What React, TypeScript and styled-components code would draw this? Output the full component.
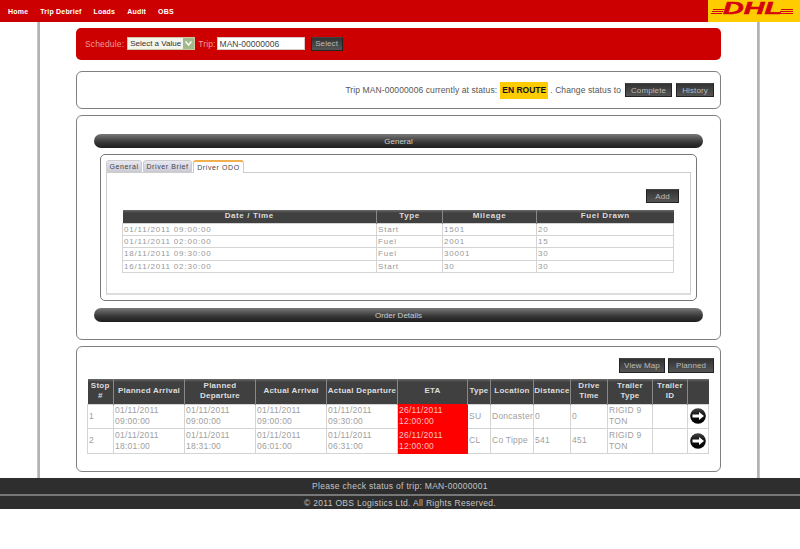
import React from "react";
import styled, { createGlobalStyle } from "styled-components";

const Global = createGlobalStyle`
  html, body { margin: 0; padding: 0; background: #fff; }
  body { font-family: "Liberation Sans", Arial, sans-serif; width: 800px; height: 549px; overflow: hidden; }
  * { box-sizing: border-box; }
`;

const TopBar = styled.header`
  height: 22px; background: #cc0000; display: flex; justify-content: space-between;
`;
const Nav = styled.nav`
  display: flex; gap: 12px; padding: 0 0 0 8px; align-items: center; height: 22px;
`;
const NavLink = styled.a`
  color: #fff; font-size: 7px; font-weight: bold; letter-spacing: 0.2px;
`;
const LogoBox = styled.div`
  width: 92px; height: 22px; background: #ffcc00; display: block;
`;

const Column = styled.main`
  width: 723px; margin-left: 37px; height: 456px; padding: 6px 39px 6px 39px;
  display: flex; flex-direction: column;
  background: linear-gradient(90deg, #d0d0d0 0, #a8a8a8 2px, #c0c0c0 3px, #fff 3px, #fff 720px, #c0c0c0 720px, #a8a8a8 721px, #d0d0d0 723px);
`;
const RedPanel = styled.form`
  height: 32px; background: #cc0000; border-radius: 5px; display: flex; align-items: center;
  padding: 0 0 1px 9px; margin-bottom: 11px; color: #ee9a9a; font-size: 8.5px; letter-spacing: 0.15px;
`;
const FieldLabel = styled.span<{ $gap: number }>`
  margin-right: ${(p) => p.$gap}px;
`;
const FakeSelect = styled.div`
  width: 68px; height: 13px; background: #f4f4ec; border: 1px solid #c9c9a8; color: #333;
  font-size: 8px; letter-spacing: 0; white-space: nowrap;
  display: flex; align-items: center; justify-content: space-between; padding-left: 2px; margin-right: 3px;
`;
const SelectArrow = styled.span`
  width: 11px; height: 11px; background: #a3b98a; display: flex; align-items: center; justify-content: center;
`;
const TripInput = styled.div`
  width: 88px; height: 13px; background: #fff; border: 1px solid #d8c8c8; color: #444;
  font-size: 8.5px; letter-spacing: 0; display: flex; align-items: center; padding-left: 2px; margin-right: 6px;
`;
const Button = styled.button<{ $w: number; $h?: number }>`
  width: ${(p) => p.$w}px; height: ${(p) => p.$h ?? 14}px; padding: 0;
  background: linear-gradient(#333, #555); border: 1px solid #222; border-top-color: #444;
  color: #bbb; font: 8px "Liberation Sans", Arial, sans-serif; letter-spacing: 0.1px;
  display: flex; align-items: center; justify-content: center;
`;
const Panel = styled.section<{ $h: number }>`
  height: ${(p) => p.$h}px; border: 1px solid #808080; border-radius: 6px; background: #fff; flex: none;
`;
const StatusPanel = styled(Panel)`
  display: flex; align-items: center; justify-content: flex-end; padding-right: 6px; margin-bottom: 6px;
  color: #555; font-size: 8.5px; letter-spacing: 0.1px;
`;
const Badge = styled.span`
  background: #ffcc00; color: #111; font-weight: bold; font-size: 8.5px; letter-spacing: 0; width: 48px; height: 17px;
  display: flex; align-items: center; justify-content: center; margin: 0 2px 0 3px;
`;
const StatusText = styled.span`
  margin-right: 4px;
`;
const StatusButton = styled(Button)`
  margin-left: 4px;
`;
const GeneralPanel = styled(Panel)`
  padding: 18px 17px 0; margin-bottom: 6px;
`;
const Bar = styled.div`
  height: 14px; border-radius: 7px; background: linear-gradient(#7a7a7a 0, #5c5c5c 25%, #363636 60%, #1e1e1e 100%);
  color: #ccc; font-size: 8px; display: flex; align-items: center; justify-content: center;
`;
const InnerBox = styled.div`
  margin: 6px 6px 7px; height: 147px; border: 1px solid #777; border-radius: 5px; padding: 5px 5px 0;
`;
const Tabs = styled.div`
  display: flex; gap: 1px; height: 12px;
`;
const Tab = styled.div<{ $active?: boolean; $w: number }>`
  width: ${(p) => p.$w}px; height: ${(p) => (p.$active ? 13 : 12)}px; position: relative; z-index: 1;
  font-size: 7px; letter-spacing: 0.6px; color: #444; white-space: nowrap;
  display: flex; align-items: center; justify-content: center;
  background: ${(p) => (p.$active ? "#fff" : "linear-gradient(#e8e8f2, #ccccdc)")};
  border: 1px solid #ccc; border-bottom: ${(p) => (p.$active ? "none" : "1px solid #ccc")};
  border-top: ${(p) => (p.$active ? "2px solid #f0b050" : "1px solid #ccc")};
  border-radius: 3px 3px 0 0;
`;
const TabBody = styled.div`
  height: 123px; border: 1px solid #ccc; border-bottom: 2px solid #ddd; padding: 16px 11px 0 15px;
`;
const ActionRow = styled.div`
  display: flex; justify-content: flex-end; gap: 3px; margin-bottom: 7px;
`;
const Grid = styled.table<{ $w: number }>`
  width: ${(p) => p.$w}px; table-layout: fixed; border-collapse: collapse;
`;
const Th = styled.th`
  background: linear-gradient(#6a6a6a 0, #404040 3px, #404040 100%);
  color: #ddd; font-size: 8px; font-weight: bold; letter-spacing: 0.6px; text-align: center;
  border-left: 1px solid #888; border-right: 1px solid #888; padding: 0; line-height: 10.5px;
  &:first-child { border-left: none; }
  &:last-child { border-right: none; }
`;
const StopTh = styled(Th)`
  letter-spacing: 0.25px;
`;
const OdoHeadRow = styled.tr`
  height: 13px;
`;
const OdoRow = styled.tr`
  height: 12.4px;
`;
const OdoTd = styled.td`
  font-size: 8px; letter-spacing: 0.8px; color: #999; border: 1px solid #d4d4d4; padding: 0 1px;
  line-height: 11px; white-space: nowrap; overflow: hidden;
`;
const StopsPanel = styled(Panel)`
  padding: 11px 6px 0 10px;
`;
const StopHeadRow = styled.tr`
  height: 25px;
`;
const StopRow = styled.tr`
  height: 24.5px;
`;
const StopTd = styled.td<{ $late?: boolean }>`
  font-size: 8.5px; letter-spacing: 0.25px; line-height: 11px; padding: 0 1px;
  color: ${(p) => (p.$late ? "#f8c0c0" : "#a0a0a0")};
  background: ${(p) => (p.$late ? "#ff0000" : "#fff")};
  border: 1px solid #d4d4d4;
  ${(p) => (p.$late ? "border-color:#ff0000;" : "")}
`;
const StopActions = styled(ActionRow)`
  margin-bottom: 6px;
`;
const GoCell = styled(StopTd)`
  text-align: center; padding: 0;
`;
const GoIcon = styled.svg`
  display: block; margin: 0 auto;
`;
const FooterBar = styled.footer`
  height: 31px; background: #2e2e2e; color: #c4c4c4; font-size: 8.5px; letter-spacing: 0.3px;
  display: flex; flex-direction: column;
`;
const FooterLine = styled.div<{ $h: number }>`
  height: ${(p) => p.$h}px; display: flex; align-items: center; justify-content: center;
`;
const FooterRule = styled.div`
  height: 2px; background: #777;
`;

const odoRows = [
  ["01/11/2011 09:00:00", "Start", "1501", "20"],
  ["01/11/2011 02:00:00", "Fuel", "2001", "15"],
  ["18/11/2011 09:30:00", "Fuel", "30001", "30"],
  ["16/11/2011 02:30:00", "Start", "30", "30"],
];
const stopCols = [26, 71, 71, 71, 71, 70, 23, 43, 37, 37, 45, 35, 21];
const stopHead = ["Stop #", "Planned Arrival", "Planned Departure", "Actual Arrival", "Actual Departure", "ETA", "Type", "Location", "Distance", "Drive Time", "Trailer Type", "Trailer ID", ""];
const stops = [
  ["1", "01/11/2011 09:00:00", "01/11/2011 09:00:00", "01/11/2011 09:00:00", "01/11/2011 09:30:00", "26/11/2011 12:00:00", "SU", "Doncaster", "0", "0", "RIGID 9 TON", ""],
  ["2", "01/11/2011 18:01:00", "01/11/2011 18:31:00", "01/11/2011 06:01:00", "01/11/2011 06:31:00", "26/11/2011 12:00:00", "CL", "Co Tippe", "541", "451", "RIGID 9 TON", ""],
];

function Logo() {
  return (
    <svg width="92" height="22" viewBox="0 0 92 22">
      <g fill="#d40511">
        <rect x="5" y="9" width="11" height="1" />
        <rect x="4" y="11" width="11" height="1" />
        <rect x="3" y="13" width="11" height="1" />
        <rect x="73" y="9" width="12" height="1" />
        <rect x="72" y="11" width="13" height="1" />
        <rect x="71" y="13" width="14" height="1" />
        <text x="15" y="13.5" fontFamily="Liberation Sans" fontWeight="bold" fontStyle="italic" fontSize="16" stroke="#d40511" strokeWidth="0.5" textLength="59" lengthAdjust="spacingAndGlyphs">DHL</text>
      </g>
    </svg>
  );
}

function Arrow() {
  return (
    <GoIcon width="16" height="16" viewBox="0 0 16 16">
      <defs>
        <linearGradient id="goFill" x1="0" y1="0" x2="0" y2="1">
          <stop offset="0" stopColor="#444" />
          <stop offset="0.45" stopColor="#111" />
          <stop offset="1" stopColor="#000" />
        </linearGradient>
      </defs>
      <circle cx="8" cy="8" r="7.8" fill="url(#goFill)" />
      <path d="M2.5 6.6h6.5V4L14 8l-5 4V9.4H2.5z" fill="#fff" />
    </GoIcon>
  );
}

export default function App() {
  return (
    <>
      <Global />
      <TopBar>
        <Nav>
          <NavLink>Home</NavLink>
          <NavLink>Trip Debrief</NavLink>
          <NavLink>Loads</NavLink>
          <NavLink>Audit</NavLink>
          <NavLink>OBS</NavLink>
        </Nav>
        <LogoBox><Logo /></LogoBox>
      </TopBar>
      <Column>
        <RedPanel>
          <FieldLabel $gap={3}>Schedule:</FieldLabel>
          <FakeSelect>
            Select a Value
            <SelectArrow>
              <svg width="7" height="5" viewBox="0 0 7 5"><path d="M0.5 0.5L3.5 4L6.5 0.5" fill="none" stroke="#fff" strokeWidth="1.4" /></svg>
            </SelectArrow>
          </FakeSelect>
          <FieldLabel $gap={1}>Trip:</FieldLabel>
          <TripInput>MAN-00000006</TripInput>
          <Button type="button" $w={32}>Select</Button>
        </RedPanel>
        <StatusPanel $h={38}>
          Trip MAN-00000006 currently at status:
          <Badge>EN ROUTE</Badge>
          <StatusText>. Change status to</StatusText>
          <Button type="button" $w={47}>Complete</Button>
          <StatusButton type="button" $w={38}>History</StatusButton>
        </StatusPanel>
        <GeneralPanel $h={225}>
          <Bar>General</Bar>
          <InnerBox>
            <Tabs>
              <Tab $w={36}>General</Tab>
              <Tab $w={49}>Driver Brief</Tab>
              <Tab $w={51} $active>Driver ODO</Tab>
            </Tabs>
            <TabBody>
              <ActionRow>
                <Button type="button" $w={33}>Add</Button>
              </ActionRow>
              <Grid $w={551}>
                <colgroup><col width="254" /><col width="66" /><col width="94" /><col width="137" /></colgroup>
                <thead>
                  <OdoHeadRow><Th>Date / Time</Th><Th>Type</Th><Th>Mileage</Th><Th>Fuel Drawn</Th></OdoHeadRow>
                </thead>
                <tbody>
                  {odoRows.map((r, i) => (
                    <OdoRow key={i}>{r.map((c, j) => <OdoTd key={j}>{c}</OdoTd>)}</OdoRow>
                  ))}
                </tbody>
              </Grid>
            </TabBody>
          </InnerBox>
          <Bar>Order Details</Bar>
        </GeneralPanel>
        <StopsPanel $h={126}>
          <StopActions>
            <Button type="button" $w={46} $h={15}>View Map</Button>
            <Button type="button" $w={46} $h={15}>Planned</Button>
          </StopActions>
          <Grid $w={621}>
            <colgroup>{stopCols.map((w, i) => <col key={i} width={w} />)}</colgroup>
            <thead>
              <StopHeadRow>{stopHead.map((h, i) => <StopTh key={i}>{h}</StopTh>)}</StopHeadRow>
            </thead>
            <tbody>
              {stops.map((r, i) => (
                <StopRow key={i}>
                  {r.map((c, j) => <StopTd key={j} $late={j === 5}>{c}</StopTd>)}
                  <GoCell><Arrow /></GoCell>
                </StopRow>
              ))}
            </tbody>
          </Grid>
        </StopsPanel>
      </Column>
      <FooterBar>
        <FooterLine $h={16}>Please check status of trip: MAN-00000001</FooterLine>
        <FooterRule />
        <FooterLine $h={13}>© 2011 OBS Logistics Ltd. All Rights Reserved.</FooterLine>
      </FooterBar>
    </>
  );
}
